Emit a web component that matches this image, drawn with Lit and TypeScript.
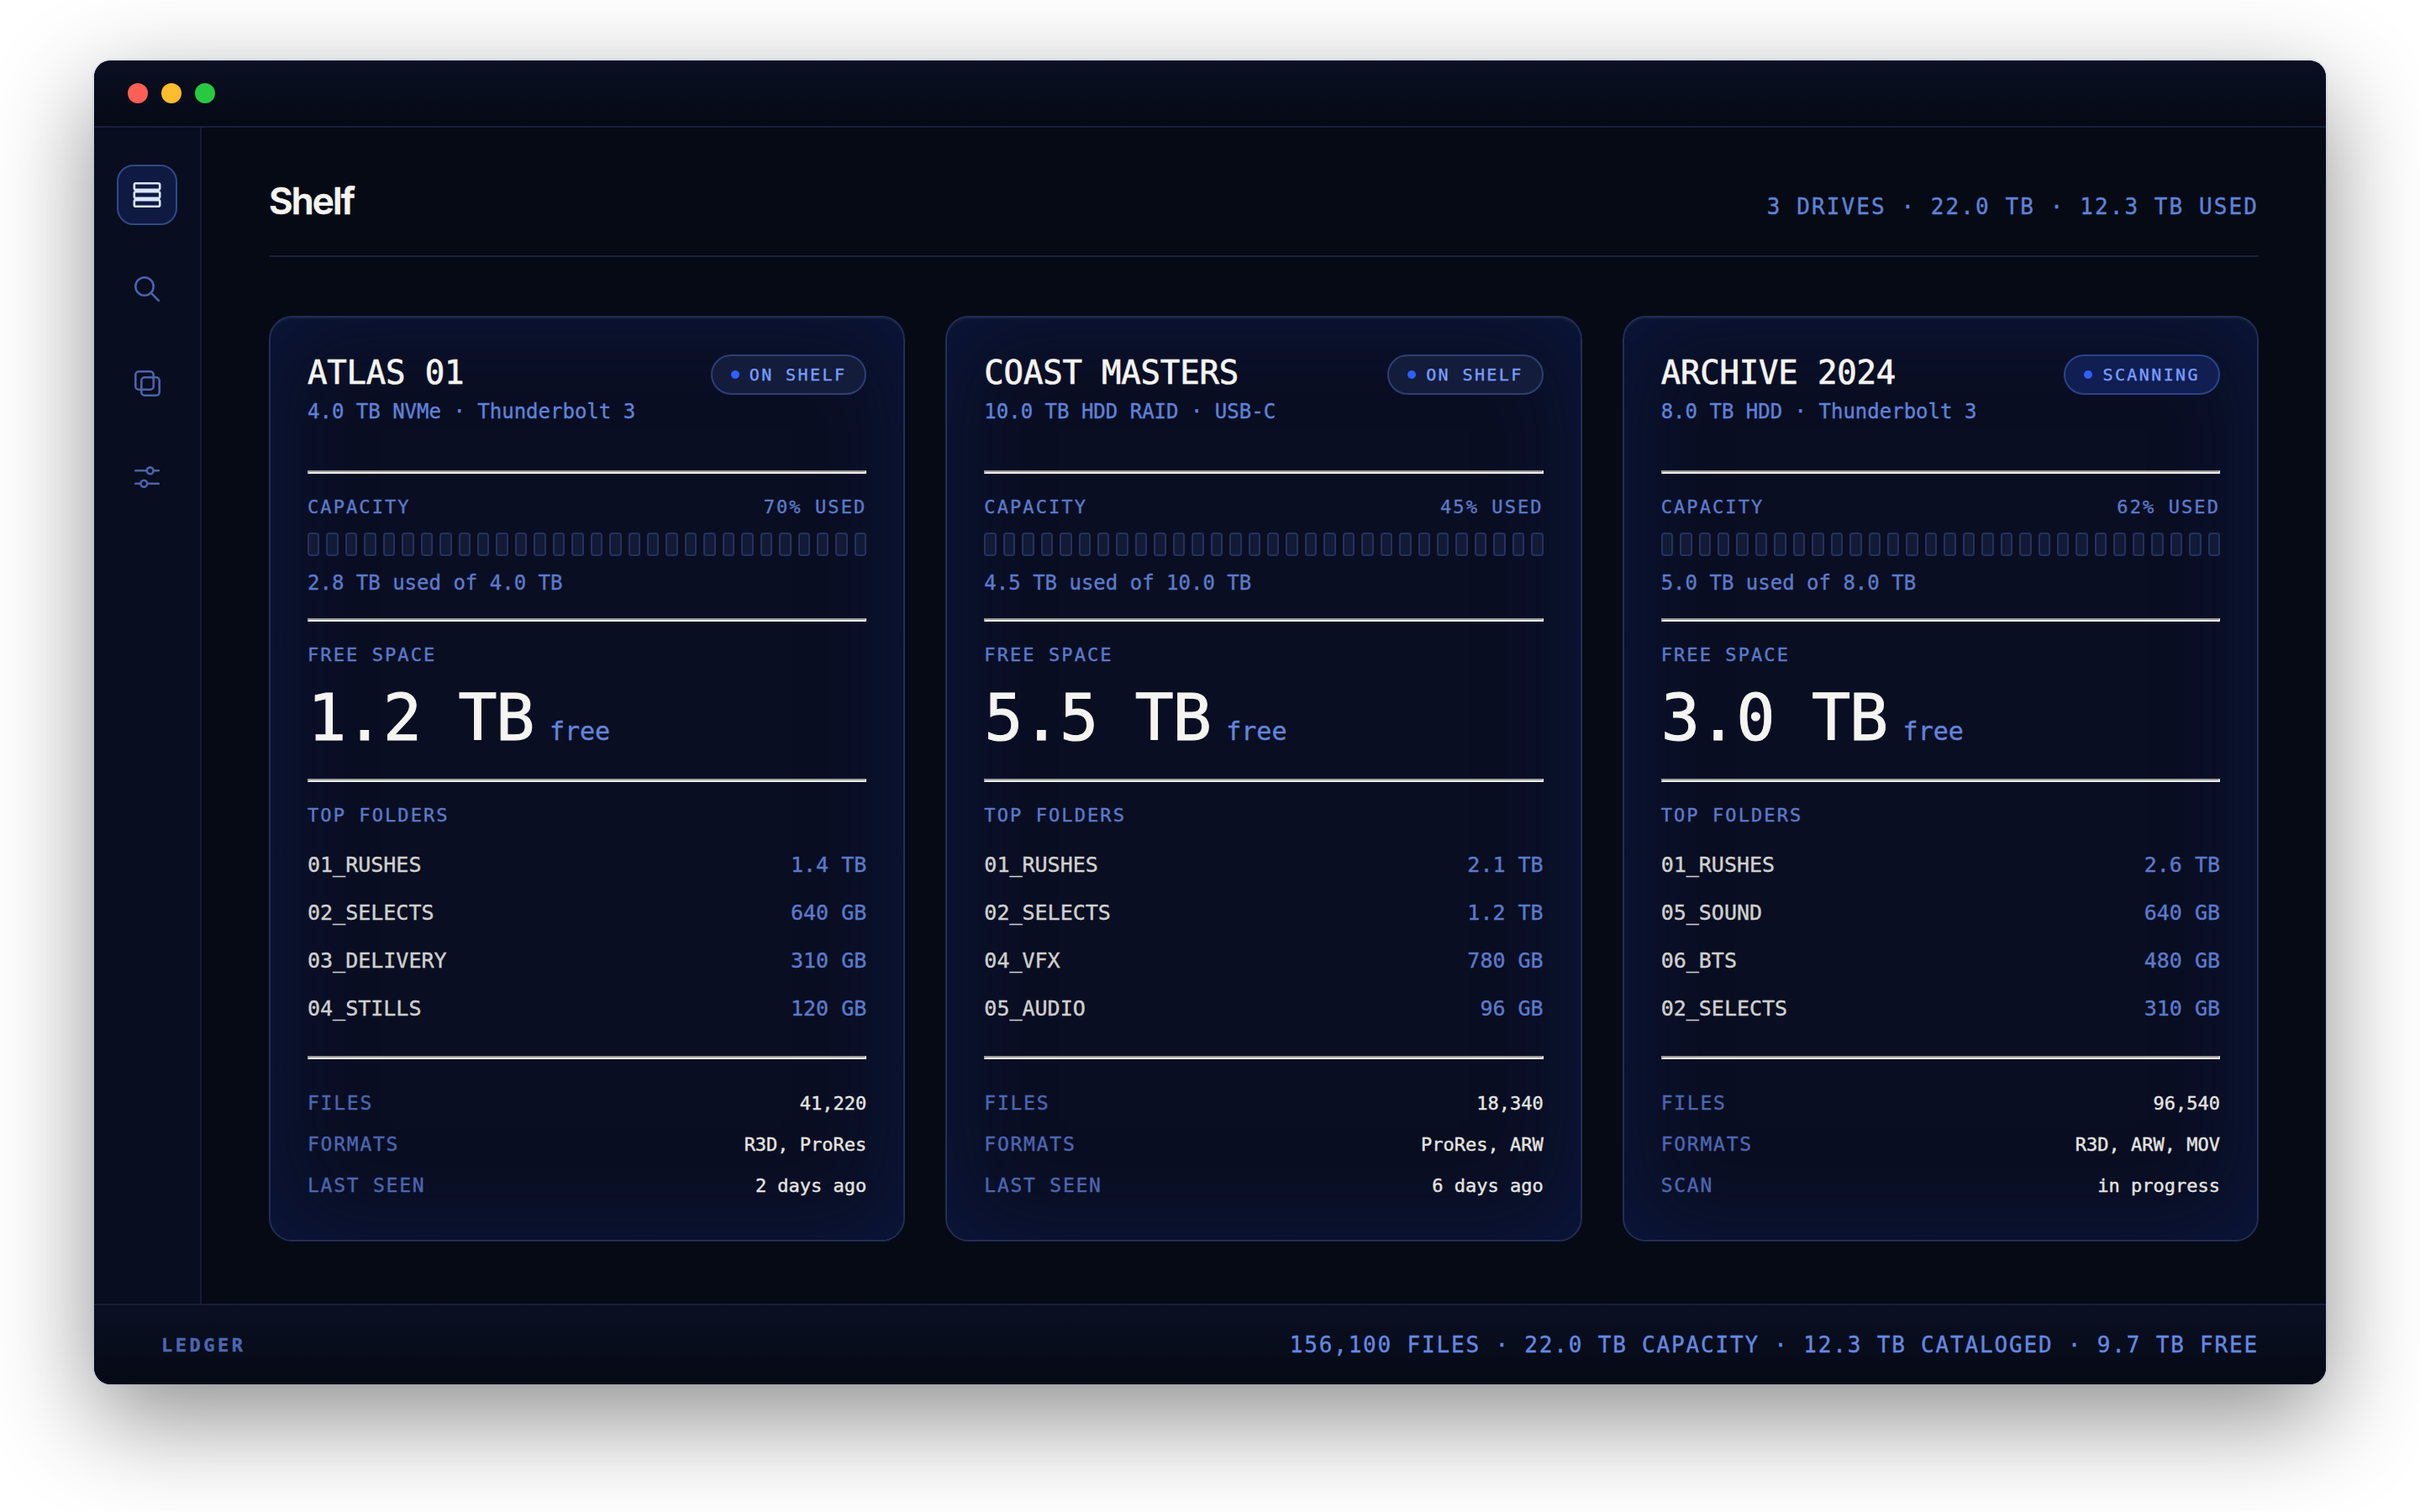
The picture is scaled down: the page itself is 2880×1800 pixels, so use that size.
import { LitElement, html, css, svg } from "lit";
import { customElement, property } from "lit/decorators.js";

interface Drive {
  name: string;
  kind: string;
  status: string;
  scanning?: boolean;
  percent: string;
  used: string;
  free: string;
  folders: [string, string][];
  meta: [string, string][];
}

const DRIVES: Drive[] = [
  {
    name: "ATLAS 01",
    kind: "4.0 TB NVMe · Thunderbolt 3",
    status: "ON SHELF",
    percent: "70% USED",
    used: "2.8 TB used of 4.0 TB",
    free: "1.2 TB",
    folders: [["01_RUSHES", "1.4 TB"], ["02_SELECTS", "640 GB"], ["03_DELIVERY", "310 GB"], ["04_STILLS", "120 GB"]],
    meta: [["FILES", "41,220"], ["FORMATS", "R3D, ProRes"], ["LAST SEEN", "2 days ago"]],
  },
  {
    name: "COAST MASTERS",
    kind: "10.0 TB HDD RAID · USB-C",
    status: "ON SHELF",
    percent: "45% USED",
    used: "4.5 TB used of 10.0 TB",
    free: "5.5 TB",
    folders: [["01_RUSHES", "2.1 TB"], ["02_SELECTS", "1.2 TB"], ["04_VFX", "780 GB"], ["05_AUDIO", "96 GB"]],
    meta: [["FILES", "18,340"], ["FORMATS", "ProRes, ARW"], ["LAST SEEN", "6 days ago"]],
  },
  {
    name: "ARCHIVE 2024",
    kind: "8.0 TB HDD · Thunderbolt 3",
    status: "SCANNING",
    scanning: true,
    percent: "62% USED",
    used: "5.0 TB used of 8.0 TB",
    free: "3.0 TB",
    folders: [["01_RUSHES", "2.6 TB"], ["05_SOUND", "640 GB"], ["06_BTS", "480 GB"], ["02_SELECTS", "310 GB"]],
    meta: [["FILES", "96,540"], ["FORMATS", "R3D, ARW, MOV"], ["SCAN", "in progress"]],
  },
];

const CELLS = Array.from({ length: 30 });

@customElement("drive-card")
export class DriveCard extends LitElement {
  @property({ attribute: false }) drive!: Drive;

  static styles = css`
    :host {
      display: block;
      box-sizing: border-box;
      min-width: 0;
      height: 1102px;
      padding: 44px;
      border: 2px solid #222e59;
      border-radius: 28px;
      background: #0a0e22;
      box-shadow: inset 0 2px 0 rgba(255, 255, 255, 0.04), inset 0 0 120px rgba(12, 38, 104, 0.4);
      font-family: Menlo, "DejaVu Sans Mono", monospace;
      -webkit-text-stroke: 0.4px currentColor;
    }
    .head, .row, .folder, .fact { display: flex; justify-content: space-between; }
    .head { height: 94px; align-items: flex-start; }
    .name {
      font-size: 39px; line-height: 44px; letter-spacing: -0.2px; color: #f4f4f0;
      white-space: pre; -webkit-text-stroke-width: 0.7px;
    }
    .kind { font-size: 24px; line-height: 28px; margin-top: 10px; color: #5f82d8; }
    .badge {
      display: flex; align-items: center; gap: 12px; box-sizing: border-box;
      height: 48px; padding: 0 22px; border: 2px solid #2d3f74; border-radius: 24px;
      background: #131c3a; color: #7a9dff; font-size: 20px; letter-spacing: 0.12em; line-height: 24px;
    }
    .badge.scanning { background: #101e52; border-color: #2c4388; }
    .dot { width: 10px; height: 10px; border-radius: 50%; background: #2f5fff; }
    .rule {
      height: 0; margin: 0; border: 2px solid;
      border-color: #9a9a98 #eeeeee #eeeeee #9a9a98;
    }
    .head + .rule { margin-top: 44px; }
    .label { font-size: 22px; line-height: 26px; letter-spacing: 0.095em; color: #5b7aca; }
    .row { margin-top: 27px; }
    .cells { display: grid; grid-template-columns: repeat(30, minmax(0, 1fr)); gap: 8px; margin-top: 17px; }
    .cell { box-sizing: border-box; height: 28px; border: 2px solid #25325e; border-radius: 4px; background: #121a36; }
    .used { margin-top: 18px; margin-bottom: 28px; font-size: 24px; line-height: 28px; color: #5b7aca; }
    .solo { margin-top: 27px; }
    .free { display: flex; align-items: baseline; margin-top: 17px; height: 117px; line-height: 90px; }
    .amount { font-size: 77px; letter-spacing: -0.02em; color: #f4f4f0; -webkit-text-stroke-width: 1px; }
    .unit { font-size: 30px; margin-left: 19px; color: #6285da; }
    .folders { margin-top: 17px; height: 256px; }
    .folder { font-size: 25px; line-height: 57px; color: #d0d0cd; }
    .size { color: #5b7aca; }
    .facts { margin-top: 28px; }
    .fact { line-height: 49px; font-size: 23px; letter-spacing: 0.076em; color: #4c66b0; }
    .value { font-size: 22px; letter-spacing: 0; color: #e4e4e0; }
  `;

  render() {
    const d = this.drive;
    return html`
      <div class="head">
        <div>
          <div class="name">${d.name}</div>
          <div class="kind">${d.kind}</div>
        </div>
        <div class="badge ${d.scanning ? "scanning" : ""}"><span class="dot"></span>${d.status}</div>
      </div>
      <div class="rule"></div>
      <div class="row label"><span>CAPACITY</span><span>${d.percent}</span></div>
      <div class="cells">${CELLS.map(() => html`<div class="cell"></div>`)}</div>
      <div class="used">${d.used}</div>
      <div class="rule"></div>
      <div class="label solo">FREE SPACE</div>
      <div class="free"><span class="amount">${d.free}</span><span class="unit">free</span></div>
      <div class="rule"></div>
      <div class="label solo">TOP FOLDERS</div>
      <div class="folders">
        ${d.folders.map(([n, s]) => html`<div class="folder"><span>${n}</span><span class="size">${s}</span></div>`)}
      </div>
      <div class="rule"></div>
      <div class="facts">
        ${d.meta.map(([k, v]) => html`<div class="fact"><span>${k}</span><span class="value">${v}</span></div>`)}
      </div>
    `;
  }
}

const icons = [
  svg`<rect x="2.4" y="3.15" width="15.2" height="3.8" rx="0.9"/><rect x="2.4" y="8.1" width="15.2" height="3.8" rx="0.9"/><rect x="2.4" y="13.05" width="15.2" height="3.8" rx="0.9"/>`,
  svg`<circle cx="8.5" cy="8.5" r="5.35"/><path d="M12.35 12.35 16.9 16.9"/>`,
  svg`<rect x="3.15" y="3.15" width="10.7" height="10.7" rx="1.9"/><rect x="6.65" y="6.65" width="10.7" height="10.7" rx="1.9"/>`,
  svg`<path d="M3.1 6.15h6.8M13.8 6.15h3.1M3.1 13.85h3.1M10.1 13.85h6.8"/><circle cx="11.85" cy="6.15" r="1.95"/><circle cx="8.15" cy="13.85" r="1.95"/>`,
];

@customElement("app-root")
export class AppRoot extends LitElement {
  static styles = css`
    :host {
      display: block; box-sizing: border-box; width: 2880px; height: 1800px;
      padding: 72px 112px 152px; overflow: hidden; background: #fff;
      font-family: Menlo, "DejaVu Sans Mono", monospace;
      -webkit-text-stroke: 0.4px currentColor;
    }
    .window {
      display: flex; flex-direction: column; height: 1576px; border-radius: 20px;
      background: #060a15;
      box-shadow: 0 0 0 2px rgba(130, 160, 220, 0.16), 0 40px 120px rgba(0, 0, 0, 0.45);
    }
    .titlebar {
      display: flex; align-items: center; gap: 16px; box-sizing: border-box; height: 80px;
      padding-left: 40px; border-bottom: 2px solid #161f3d; border-radius: 20px 20px 0 0;
      background: linear-gradient(#0a0f23, #060a15);
    }
    .light { width: 24px; height: 24px; border-radius: 50%; }
    .close { background: #ff5f57; }
    .min { background: #febc2e; }
    .max { background: #28c840; }
    .body { display: flex; height: 1400px; }
    .rail {
      display: flex; flex-direction: column; align-items: center; gap: 40px; box-sizing: border-box;
      width: 128px; padding-top: 44px; border-right: 2px solid #131c38; background: #080d1f;
    }
    .item {
      display: grid; place-items: center; box-sizing: border-box; width: 72px; height: 72px;
      border: 2px solid transparent; border-radius: 20px; color: #4a64ab;
    }
    .item svg { width: 40px; height: 40px; }
    .item.active { border-color: #324886; background: #0e1a42; color: #dbe6ff; }
    .main { flex: 1; padding: 0 80px; }
    .header {
      display: flex; justify-content: space-between; box-sizing: border-box; height: 154px;
      border-bottom: 2px solid #161f3d; margin-bottom: 70px;
    }
    .title {
      margin: 0; padding-top: 60px; font: 600 44px/54px Inter, sans-serif;
      letter-spacing: -0.042em; color: #f4f4f0; -webkit-text-stroke-width: 0.5px;
    }
    .summary { padding-top: 78px; font-size: 26px; line-height: 32px; letter-spacing: 0.08em; color: #5f82d8; }
    .cards { display: grid; grid-template-columns: repeat(3, minmax(0, 1fr)); gap: 48px; }
    .footer {
      display: flex; align-items: center; justify-content: space-between; box-sizing: border-box;
      height: 96px; padding: 0 80px; border-top: 2px solid #161f3d; border-radius: 0 0 20px 20px;
      background: linear-gradient(#0a0f23, #060a15);
    }
    .brand { font-size: 22px; font-weight: 700; letter-spacing: 0.16em; color: #4c66b0; }
    .totals { font-size: 26px; letter-spacing: 0.07em; color: #6488e0; }
  `;

  render() {
    return html`
      <div class="window">
        <div class="titlebar">
          <span class="light close"></span><span class="light min"></span><span class="light max"></span>
        </div>
        <div class="body">
          <nav class="rail">
            ${icons.map((icon, i) => html`
              <div class="item ${i === 0 ? "active" : ""}">
                <svg viewBox="0 0 20 20" fill="none" stroke="currentColor" stroke-width="1.3" stroke-linecap="round" stroke-linejoin="round">${icon}</svg>
              </div>`)}
          </nav>
          <main class="main">
            <header class="header">
              <h1 class="title">Shelf</h1>
              <div class="summary">3 DRIVES · 22.0 TB · 12.3 TB USED</div>
            </header>
            <section class="cards">
              ${DRIVES.map((d) => html`<drive-card .drive=${d}></drive-card>`)}
            </section>
          </main>
        </div>
        <footer class="footer">
          <span class="brand">LEDGER</span>
          <span class="totals">156,100 FILES · 22.0 TB CAPACITY · 12.3 TB CATALOGED · 9.7 TB FREE</span>
        </footer>
      </div>
    `;
  }
}
